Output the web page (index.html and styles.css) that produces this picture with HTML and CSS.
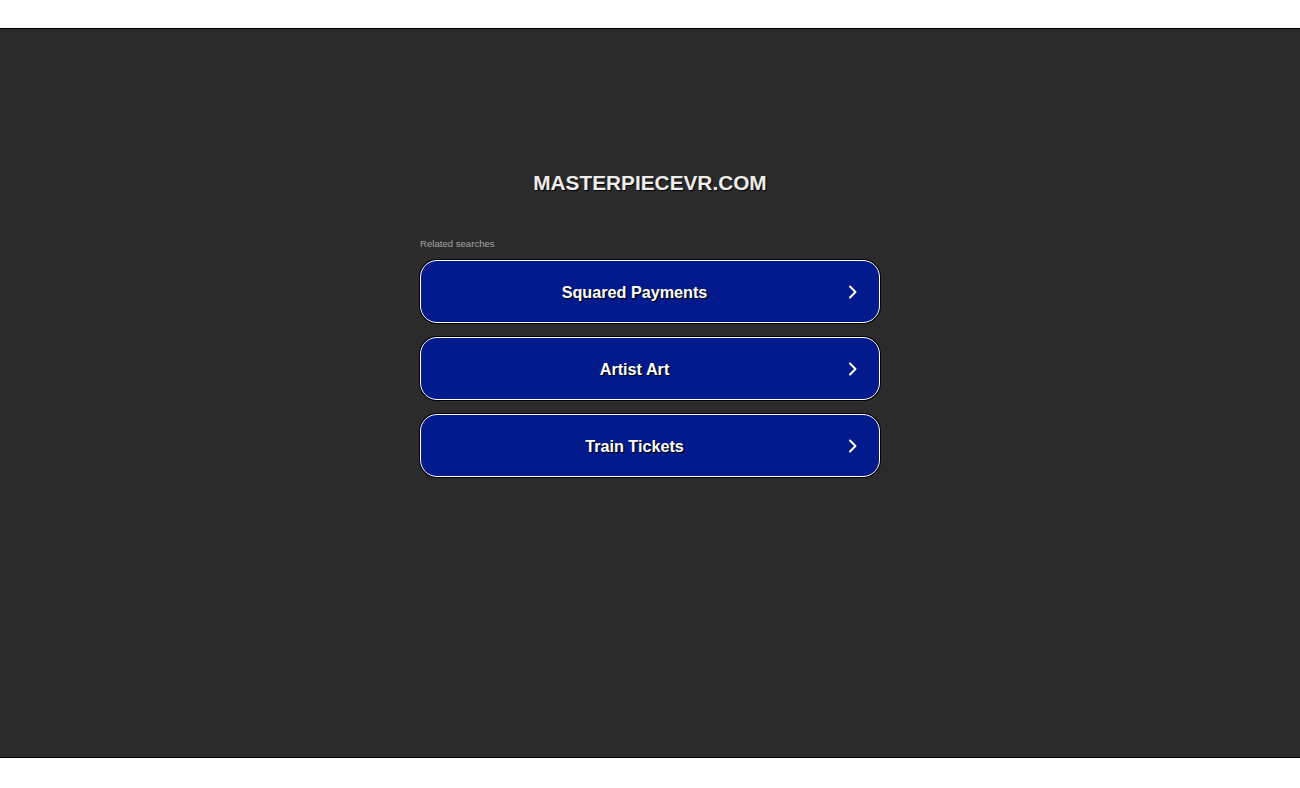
FILE: index.html
```html
<!DOCTYPE html>
<html lang="en">
<head>
<meta charset="utf-8">
<title>masterpiecevr.com</title>
<link rel="stylesheet" href="styles.css">
</head>
<body>
<div class="stage">
  <div class="content">
    <h1 class="domain">MASTERPIECEVR.COM</h1>
    <div class="related">
      <div class="related-label">Related searches</div>
      <div class="links">
        <a class="link" href="#"><span class="link-text">Squared Payments</span><svg class="chev" width="10" height="14" viewBox="0 0 10 14"><path d="M2 1.5 L7.5 7 L2 12.5" fill="none" stroke="#fff" stroke-width="2" stroke-linecap="round" stroke-linejoin="round"/></svg></a>
        <a class="link" href="#"><span class="link-text">Artist Art</span><svg class="chev" width="10" height="14" viewBox="0 0 10 14"><path d="M2 1.5 L7.5 7 L2 12.5" fill="none" stroke="#fff" stroke-width="2" stroke-linecap="round" stroke-linejoin="round"/></svg></a>
        <a class="link" href="#"><span class="link-text">Train Tickets</span><svg class="chev" width="10" height="14" viewBox="0 0 10 14"><path d="M2 1.5 L7.5 7 L2 12.5" fill="none" stroke="#fff" stroke-width="2" stroke-linecap="round" stroke-linejoin="round"/></svg></a>
      </div>
    </div>
  </div>
</div>
</body>
</html>
```
FILE: styles.css
```css
html, body {
  margin: 0;
  padding: 0;
  background: #ffffff;
}
body {
  padding-top: 28px;
  font-family: "Liberation Sans", Arial, sans-serif;
}
.stage {
  height: 728px;
  background: #2b2b2b;
  border-top: 1px solid #000;
  border-bottom: 1px solid #000;
}
.content {
  display: flex;
  flex-direction: column;
  align-items: center;
  padding-top: 142px;
}
.domain {
  margin: 0;
  font-size: 20.8px;
  line-height: 24px;
  font-weight: 700;
  color: #eeeeee;
  text-shadow: 1px 1px 1px #000;
}
.related {
  width: 460px;
  margin-top: 43px;
}
.related-label {
  font-size: 9.6px;
  line-height: 11px;
  color: #a4a4a8;
  margin-bottom: 11px;
}
.links {
  display: flex;
  flex-direction: column;
  gap: 14px;
}
.link {
  display: flex;
  align-items: center;
  height: 61px;
  background: #021a8c;
  border: 1px solid #ffffff;
  border-radius: 17px;
  box-shadow: 0 0 0 1px #000;
  text-decoration: none;
  color: #ffffff;
  padding-right: 21px;
}
.link-text {
  flex: 1;
  text-align: center;
  padding-top: 2px;
  font-size: 16.2px;
  font-weight: 700;
  text-shadow: 1px 1px 1px #000;
}
.chev {
  flex: none;
}
```
